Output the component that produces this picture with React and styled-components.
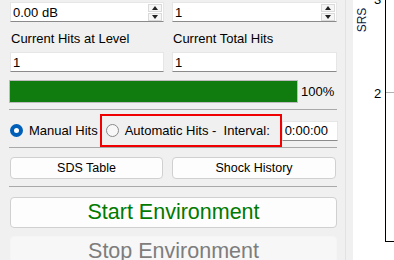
import styled, { createGlobalStyle } from "styled-components";

const GlobalStyle = createGlobalStyle`
  html, body {
    margin: 0;
    padding: 0;
    background: #f0f0f0;
    font-family: "Liberation Sans", "Noto Sans", sans-serif;
    font-size: 12px;
    color: #000;
  }
`;

const Screen = styled.div`
  display: flex;
  width: 394px;
  height: 260px;
  overflow: hidden;
`;

const Panel = styled.div`
  width: 335px;
  flex: none;
  padding: 2px 0 0 10px;
  display: flex;
  flex-direction: column;
  border-right: 1px solid #e2e2e2;
`;

const Gutter = styled.div`
  width: 7px;
  flex: none;
`;

const Grid = styled.div`
  display: grid;
  grid-template-columns: 154px 165px;
  column-gap: 8px;
  margin-top: ${(p) => p.$top || 0}px;
`;

const Field = styled.div`
  position: relative;
  height: 20px;
  background: #fff;
  border: 1px solid #e6e6e6;
  border-bottom-color: #8a8a8a;
  box-sizing: border-box;
  display: flex;
  align-items: center;
  padding-left: 2px;
  font-size: 13px;
  flex: none;
  width: ${(p) => (p.$width ? `${p.$width}px` : "auto")};
`;

const SpinButtons = styled.div`
  margin-left: auto;
  margin-right: 1px;
  display: flex;
  flex-direction: column;
  gap: 1px;
`;

const SpinBtn = styled.div`
  width: 14px;
  height: 8px;
  background: #f6f6f6;
  border: 1px solid #dadada;
  box-sizing: border-box;
  display: flex;
  align-items: center;
  justify-content: center;
  &::after {
    content: "";
    border-left: 3px solid transparent;
    border-right: 3px solid transparent;
    ${(p) => (p.$down ? "border-top: 4px solid #222;" : "border-bottom: 4px solid #222;")}
  }
`;

const Label = styled.div`
  height: 16px;
  line-height: 16px;
  font-size: 13px;
  padding-left: 1px;
`;

const ProgressRow = styled.div`
  display: flex;
  align-items: center;
  margin-top: 8px;
  margin-left: -1px;
  height: 23px;
`;

const Bar = styled.div`
  width: 289px;
  height: 23px;
  border: 1px solid #bcbcbc;
  box-sizing: border-box;
  background: #e6e6e6;
`;

const Fill = styled.div`
  height: 100%;
  background: #107c10;
`;

const Percent = styled.div`
  margin-left: 3px;
  font-size: 13px;
`;

const Separator = styled.div`
  height: 1px;
  background: #a9a9a9;
  width: 328px;
  margin-left: -1px;
  margin-top: ${(p) => p.$top || 0}px;
  flex: none;
`;

const RadioRow = styled.div`
  display: flex;
  align-items: center;
  margin-top: 4px;
  height: 33px;
`;

const Radio = styled.span`
  width: 13px;
  height: 13px;
  border-radius: 50%;
  box-sizing: border-box;
  flex: none;
  ${(p) =>
    p.$checked
      ? "background: #fff; border: 4px solid #005fb8;"
      : "background: #f7f7f7; border: 1px solid #8a8a8a;"}
`;

const RadioText = styled.span`
  margin-left: 6px;
  font-size: 13px;
  white-space: pre;
`;

const Highlight = styled.div`
  display: flex;
  align-items: center;
  height: 33px;
  box-sizing: border-box;
  border: 2px solid #f00000;
  margin-left: 2px;
  padding-left: 4px;
  width: 182px;
  flex: none;
`;

const ButtonRow = styled.div`
  display: grid;
  grid-template-columns: 153px 164px;
  column-gap: 9px;
  margin-top: 9px;
`;

const Button = styled.div`
  height: 22px;
  box-sizing: border-box;
  border: 1px solid #d0d0d0;
  border-radius: 4px;
  background: #fdfdfd;
  display: flex;
  align-items: center;
  justify-content: center;
  font-size: 12.5px;
`;

const BigButton = styled.div`
  height: 31px;
  width: 327px;
  box-sizing: border-box;
  border: 1px solid ${(p) => (p.$disabled ? "#f5f5f5" : "#d0d0d0")};
  border-radius: 4px;
  background: ${(p) => (p.$disabled ? "#f7f7f7" : "#fdfdfd")};
  color: ${(p) => (p.$disabled ? "#7d7d7d" : "#007a00")};
  display: flex;
  align-items: center;
  justify-content: center;
  font-size: 21.5px;
  margin-top: ${(p) => p.$top}px;
  flex: none;
`;

const Chart = styled.div`
  position: relative;
  flex: 1;
  background: #fff;
`;

const AxisTitle = styled.div`
  position: absolute;
  left: -3px;
  top: 13px;
  transform: rotate(-90deg);
  font-size: 12px;
  color: #0a1a40;
`;

const Plot = styled.div`
  position: absolute;
  left: 32px;
  top: -10px;
  right: -10px;
  height: 251px;
  border-left: 1px solid #000;
  border-bottom: 1px solid #000;
`;

const Tick = styled.div`
  position: absolute;
  left: 0;
  width: 10px;
  height: 1px;
  background: #b0b0b0;
`;

const TickLabel = styled.div`
  position: absolute;
  left: 21px;
  font-size: 13px;
`;

function SpinBox({ value, width }) {
  return (
    <Field $width={width}>
      {value}
      <SpinButtons>
        <SpinBtn />
        <SpinBtn $down />
      </SpinButtons>
    </Field>
  );
}

export default function App() {
  const ticks = [3, 2];
  return (
    <>
      <GlobalStyle />
      <Screen>
        <Panel>
          <Grid>
            <SpinBox value="0.00 dB" />
            <SpinBox value="1" />
          </Grid>
          <Grid $top={9}>
            <Label>Current Hits at Level</Label>
            <Label>Current Total Hits</Label>
          </Grid>
          <Grid $top={5}>
            <Field>1</Field>
            <Field>1</Field>
          </Grid>
          <ProgressRow>
            <Bar>
              <Fill style={{ width: "100%" }} />
            </Bar>
            <Percent>100%</Percent>
          </ProgressRow>
          <Separator $top={6} />
          <RadioRow>
            <Radio $checked />
            <RadioText>Manual Hits</RadioText>
            <Highlight>
              <Radio />
              <RadioText>Automatic Hits -  Interval:</RadioText>
            </Highlight>
            <Field $width={56}>0:00:00</Field>
          </RadioRow>
          <Separator $top={0} />
          <ButtonRow>
            <Button>SDS Table</Button>
            <Button>Shock History</Button>
          </ButtonRow>
          <Separator $top={7} />
          <BigButton $top={10}>Start Environment</BigButton>
          <BigButton $top={8} $disabled>
            Stop Environment
          </BigButton>
        </Panel>
        <Gutter />
        <Chart>
          <AxisTitle>SRS</AxisTitle>
          {ticks.map((t, i) => (
            <TickLabel key={t} style={{ top: -8 + i * 94 }}>
              {t}
            </TickLabel>
          ))}
          <Plot>
            {ticks.map((t, i) => (
              <Tick key={t} style={{ top: 8 + i * 94 }} />
            ))}
          </Plot>
        </Chart>
      </Screen>
    </>
  );
}
